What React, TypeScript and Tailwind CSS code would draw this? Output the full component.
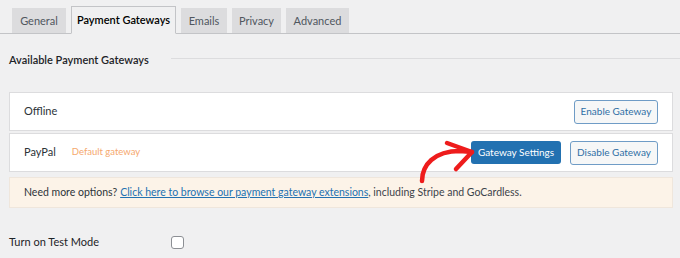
import React from "react";

const tabs = [
  { label: "General", w: "w-[54px]" },
  { label: "Payment Gateways", w: "w-[105px]" },
  { label: "Emails", w: "w-[46px]" },
  { label: "Privacy", w: "w-[49px]" },
  { label: "Advanced", w: "w-[63px]" },
];

function Arrow() {
  return (
    <svg
      className="absolute pointer-events-none"
      style={{ left: 410, top: 134 }}
      width="72"
      height="56"
      viewBox="0 0 72 56"
      fill="none"
    >
      <path
        d="M12 47 C 12 31, 24 17, 50 17 L 62 18"
        stroke="#ee1c1c"
        strokeWidth="4.5"
        strokeLinecap="round"
        strokeLinejoin="round"
      />
      <path
        d="M37 9 L 62 18 L 46 35"
        stroke="#ee1c1c"
        strokeWidth="4.5"
        strokeLinecap="round"
        strokeLinejoin="round"
      />
    </svg>
  );
}

export default function App() {
  return (
    <div
      className="relative w-[680px] h-[258px] bg-[#f0f0f1] text-[10.5px] text-[#1d2327] overflow-hidden"
      style={{ fontFamily: 'Lato, "Noto Sans", sans-serif' }}
    >
      {/* tabs */}
      <div className="flex items-end gap-[5px] pl-3 border-b border-[#c3c4c7] h-[34px] text-[11px]">
        {tabs.map((t) => {
          const active = t.label === "Payment Gateways";
          return (
            <div
              key={t.label}
              className={
                active
                  ? `${t.w} h-[28px] flex items-center justify-center border border-[#c3c4c7] border-b-[#f0f0f1] -mb-px bg-[#f0f0f1] text-black font-semibold`
                  : `${t.w} h-[25px] flex items-center justify-center border border-b-0 border-[#dcdcde] bg-[#dcdcde] text-[#50575e]`
              }
            >
              {t.label}
            </div>
          );
        })}
      </div>

      {/* heading */}
      <div className="flex items-center pl-[9px] mt-[16px] h-[20px] text-[11px]">
        <span className="whitespace-nowrap font-semibold text-[#1d2327] w-[162px]">
          Available Payment Gateways
        </span>
        <div className="flex-1 border-t border-[#dcdcde] -mt-[3px]" />
      </div>

      {/* gateways */}
      <div className="ml-[9px] mr-[7px] mt-[22px] flex flex-col gap-[2px]">
        <div className="h-[39px] bg-white border border-[#dcdcde] flex items-center justify-between pl-[14px] pr-[14px]">
          <span className="text-[11px] text-[#2c3338]">Offline</span>
          <button className="w-[84px] h-[24px] border border-[#6f9cc6] rounded-[3px] bg-[#f6f7f7] text-[#2f6fa5] text-[10px]">
            Enable Gateway
          </button>
        </div>
        <div className="h-[39px] bg-white border border-[#dcdcde] flex items-center pl-[14px] pr-[14px]">
          <span className="text-[11px] text-[#2c3338]">PayPal</span>
          <span className="ml-[16px] text-[9.5px] text-[#f5a86e]">Default gateway</span>
          <div className="ml-auto flex gap-[9px]">
            <button className="w-[90px] h-[23px] rounded-[3px] bg-[#2271b1] text-white text-[10px]">
              Gateway Settings
            </button>
            <button className="w-[88px] h-[24px] border border-[#6f9cc6] rounded-[3px] bg-[#f6f7f7] text-[#2f6fa5] text-[10px]">
              Disable Gateway
            </button>
          </div>
        </div>
        <div className="mt-[3px] h-[31px] bg-[#fcf3e8] border border-[#efe6dc] flex items-center pl-[14px] text-[#3c434a]">
          <span className="text-[#2c3338]">Need more options?</span>
          <span className="ml-[3px] text-[#2271b1] underline">
            Click here to browse our payment gateway extensions
          </span>
          <span>, including Stripe and GoCardless.</span>
        </div>
      </div>

      {/* test mode */}
      <div className="flex items-center pl-[9px] mt-[24px] h-[20px] text-[11px]">
        <span className="w-[162px] text-[#1d2327]">Turn on Test Mode</span>
        <span className="w-[13px] h-[13px] border border-[#8c8f94] rounded-[3px] bg-white" />
      </div>

      <Arrow />
    </div>
  );
}
